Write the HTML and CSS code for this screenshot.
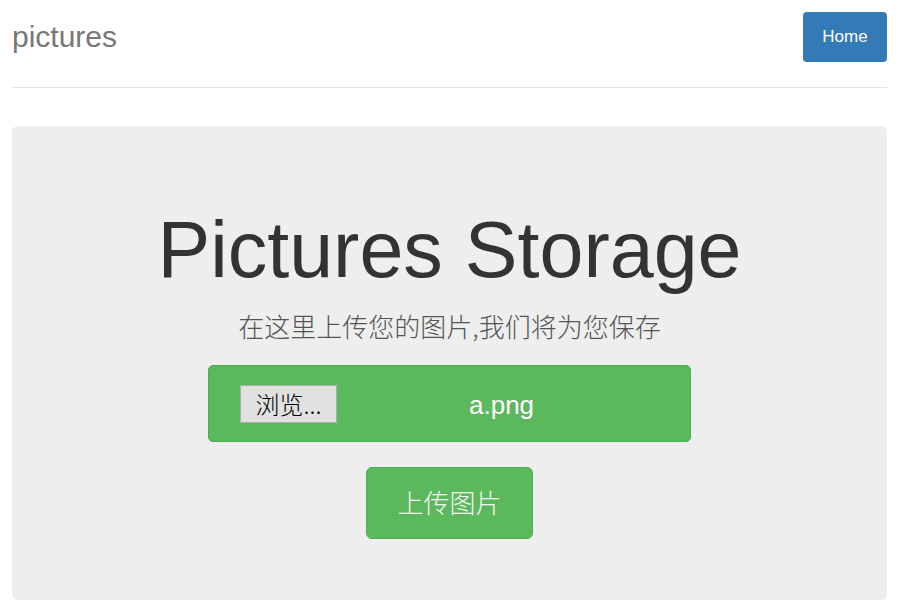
FILE: index.html
```html
<!DOCTYPE html>
<html lang="zh-CN">
<head>
<meta charset="utf-8">
<title>pictures</title>
<link rel="stylesheet" href="styles.css">
</head>
<body>
<div class="container">
  <header class="header">
    <h3 class="brand">pictures</h3>
    <nav class="nav">
      <a class="nav-btn" href="#">Home</a>
    </nav>
  </header>
  <section class="jumbotron">
    <h1 class="title">Pictures Storage</h1>
    <p class="lead">在这里上传您的图片,我们将为您保存</p>
    <div class="file-box">
      <span class="browse">浏览...</span>
      <span class="file-name">a.png</span>
    </div>
    <button class="upload" type="button">上传图片</button>
  </section>
</div>
</body>
</html>
```

FILE: styles.css
```css
html, body {
  margin: 0;
  padding: 0;
  background: #fff;
}
body {
  font-family: "Liberation Sans", Arial, "Noto Sans CJK SC", sans-serif;
  color: #333;
}
.container {
  margin: 0 13px 0 12px;
  padding-top: 12px;
}
.header {
  display: flex;
  justify-content: space-between;
  align-items: center;
  padding-bottom: 25px;
  border-bottom: 1px solid #e5e5e5;
}
.brand {
  margin: 0;
  font-size: 30px;
  line-height: 40px;
  font-weight: normal;
  color: #777;
}
.nav-btn {
  display: block;
  width: 84px;
  height: 50px;
  box-sizing: border-box;
  line-height: 50px;
  text-align: center;
  font-size: 17px;
  color: #fff;
  background: #337ab7;
  border-radius: 4px;
  text-decoration: none;
}
.jumbotron {
  margin-top: 38px;
  height: 474px;
  box-sizing: border-box;
  padding-top: 80px;
  background: #eee;
  border-radius: 6px;
  display: flex;
  flex-direction: column;
  align-items: center;
}
.title {
  margin: 0;
  font-size: 79px;
  line-height: 88px;
  font-weight: normal;
  color: #333;
}
.lead {
  margin: 14px 0 0;
  font-family: "Noto Sans CJK SC", sans-serif;
  font-size: 26px;
  line-height: 36px;
  color: #555;
  font-weight: 300;
}
.file-box {
  margin-top: 21px;
  width: 483px;
  height: 77px;
  box-sizing: border-box;
  background: #5cb85c;
  border: 1px solid #4cae4c;
  border-radius: 5px;
  display: flex;
  align-items: center;
  padding-left: 31px;
}
.browse {
  width: 97px;
  height: 38px;
  box-sizing: border-box;
  display: flex;
  align-items: center;
  justify-content: center;
  background: #e1e1e1;
  border: 1px solid #adadad;
  font-family: "Noto Sans CJK SC", sans-serif;
  font-size: 24px;
  color: #000;
  font-weight: 300;
}
.file-name {
  margin-left: 132px;
  padding-top: 4px;
  font-size: 26px;
  color: #fff;
}
.upload {
  margin-top: 25px;
  width: 167px;
  height: 72px;
  background: #5cb85c;
  border: 1px solid #4cae4c;
  border-radius: 6px;
  color: #f5f5f5;
  font-family: "Noto Sans CJK SC", sans-serif;
  font-size: 26px;
  font-weight: 300;
  padding: 0 0 4px;
}
```
